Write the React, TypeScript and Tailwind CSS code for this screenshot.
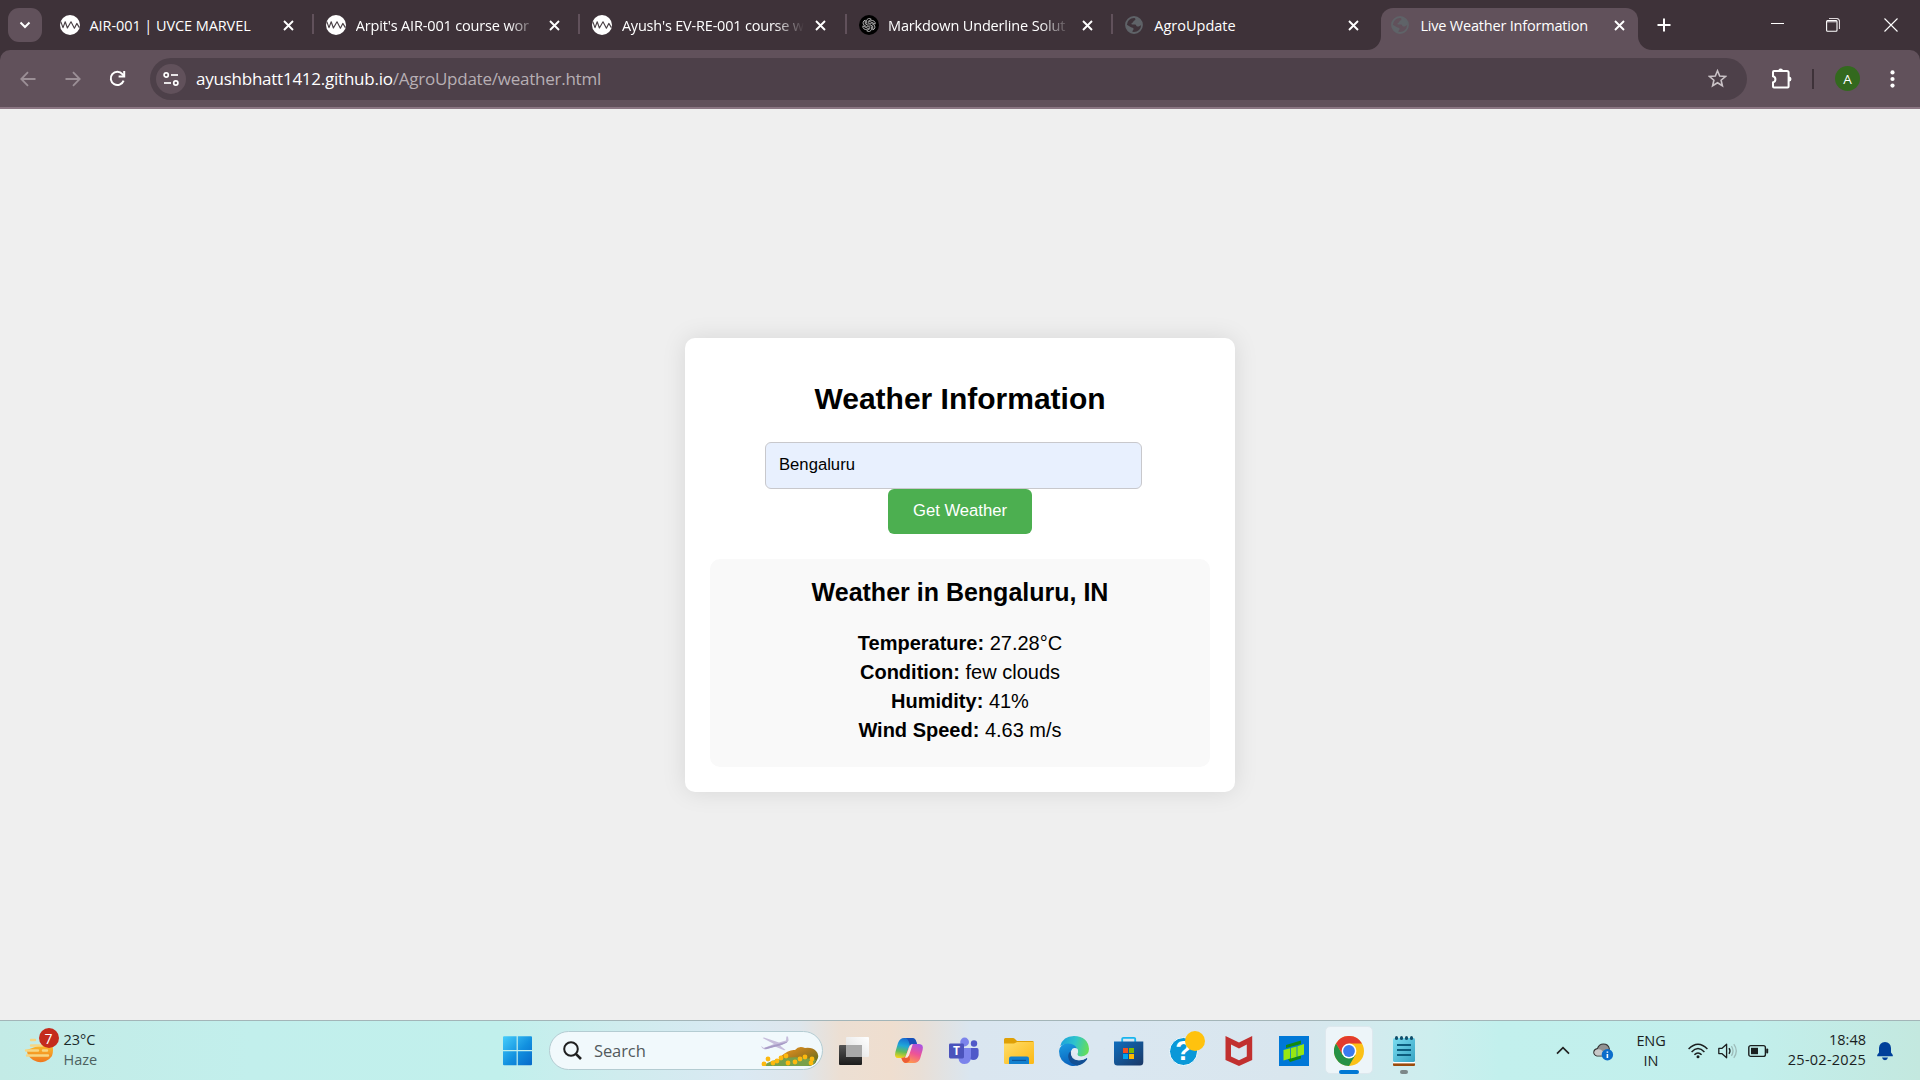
import React from "react";

const ui = "font-['Open_Sans','Noto_Sans',sans-serif]";

function WaveIcon() {
  return (
    <svg width="20" height="20" viewBox="0 0 20 20">
      <circle cx="10" cy="10" r="10" fill="#fff" />
      <path d="M0.8 6.6 L3 12.6 L5.2 6.8 L7.4 13 L11 6.8 L14.4 13.2 L16.8 8.4 L19.4 12.6" fill="none" stroke="#4a4146" strokeWidth="1.15" strokeLinejoin="round" />
    </svg>
  );
}

function GptIcon() {
  return (
    <svg width="20" height="20" viewBox="0 0 20 20">
      <circle cx="10" cy="10" r="10" fill="#000" />
      <g fill="none" stroke="#e0e0e0" strokeWidth="0.7">
        {[0, 60, 120, 180, 240, 300].map((a) => (
          <path key={a} transform={`rotate(${a} 10 10)`} d="M7.4 8.6 V6 a2.9 2.9 0 0 1 4.9 -1.7 L9.2 6.2 V9.6" />
        ))}
      </g>
    </svg>
  );
}

function GlobeIcon() {
  return (
    <svg width="18" height="18" viewBox="0 0 18 18">
      <circle cx="9" cy="9" r="8" fill="none" stroke="#5f6368" strokeWidth="1.8" />
      <path d="M8.5 1.5 C11 2 10.8 4 9.4 4.6 C8.2 5 8.4 6.6 7 7 C6 7.3 6.4 8.6 7.6 8.6 H10 C11.4 8.6 11 10.6 12.4 10.6 C14 10.8 15 9.4 16.6 9 C16.6 3.4 12 .8 8.5 1.5Z M1.4 8.6 L5.6 11 C7 11.8 8.4 11.4 8.6 13 C8.6 14.2 7 14.4 7.4 16.6 C3 16 1 12.4 1.4 8.6Z" fill="#5f6368" />
    </svg>
  );
}

function Cross() {
  return (
    <svg width="11" height="11" viewBox="0 0 11 11" className="shrink-0">
      <path d="M1 1 L10 10 M10 1 L1 10" stroke="#fff" strokeWidth="1.9" />
    </svg>
  );
}

type TabProps = { icon: React.ReactNode; title: string; tracking: string; fade?: boolean; sep?: boolean; active?: boolean };

function Tab({ icon, title, tracking, fade, sep, active }: TabProps) {
  return (
    <div className="relative flex h-[50px] w-[266.2px] shrink-0 items-center pl-[13px]">
      {active && (
        <div className="absolute top-[7.5px] left-[3px] h-[42.5px] w-[257px] rounded-t-[12px] bg-[#61515b]">
          <svg className="absolute bottom-0 -left-[14px]" width="14" height="14">
            <path d="M14 0 V14 H0 A14 14 0 0 0 14 0Z" fill="#61515b" />
          </svg>
          <svg className="absolute -right-[14px] bottom-0" width="14" height="14">
            <path d="M0 0 V14 H14 A14 14 0 0 1 0 0Z" fill="#61515b" />
          </svg>
        </div>
      )}
      <div className="relative w-[29.5px] shrink-0">{icon}</div>
      <div className={`relative mt-[2px] h-[24px] w-[184px] text-[14.5px] leading-[24px] whitespace-nowrap text-white ${tracking} ${fade ? "[mask-image:linear-gradient(to_right,black_152px,transparent_182px)]" : ""}`}>
        {title}
      </div>
      <div className="relative ml-[9.5px] flex">
        <Cross />
      </div>
      {sep && <div className="absolute top-[14px] -right-px h-[20px] w-[2px] bg-[#61515b]" />}
    </div>
  );
}

function TabStrip() {
  return (
    <div className="flex h-[50px] items-center bg-[#3e3239]">
      <div className="ml-[8px] flex h-[34px] w-[34px] items-center justify-center rounded-[11px] bg-[#61515b]">
        <svg width="12" height="8" viewBox="0 0 12 8"><path d="M1.5 1.5 L6 6 L10.5 1.5" fill="none" stroke="#fff" strokeWidth="2" /></svg>
      </div>
      <div className="w-[5px]" />
      <Tab icon={<WaveIcon />} title="AIR-001 | UVCE MARVEL" tracking="tracking-[-0.08px]" sep />
      <Tab icon={<WaveIcon />} title="Arpit's AIR-001 course wor" tracking="tracking-[-0.16px]" fade sep />
      <Tab icon={<WaveIcon />} title="Ayush's EV-RE-001 course w" tracking="tracking-[-0.2px]" fade sep />
      <Tab icon={<GptIcon />} title="Markdown Underline Solut" tracking="tracking-[-0.16px]" fade sep />
      <Tab icon={<GlobeIcon />} title="AgroUpdate" tracking="tracking-[0px]" />
      <Tab icon={<GlobeIcon />} title="Live Weather Information" tracking="tracking-[-0.2px]" active />
      <svg className="ml-[12.5px]" width="14" height="14"><path d="M7 0.5 V13.5 M0.5 7 H13.5" stroke="#fff" strokeWidth="2" /></svg>
      <div className="flex-1" />
      <svg width="14" height="14"><path d="M1 5.5 H14" stroke="#fff" /></svg>
      <svg className="ml-[42px]" width="14" height="14" fill="none">
        <path d="M3 0.5 H10.5 A3 3 0 0 1 13.5 3.5 V11" stroke="#ddd6da" strokeWidth="1.2" />
        <path d="M1 2.5 H10.5 V4.5 H1Z" fill="#a39aa0" />
        <rect x="0.6" y="2.6" width="10.4" height="10.6" rx="1" stroke="#fff" strokeWidth="1.1" />
      </svg>
      <svg className="mr-[22px] ml-[44px]" width="14" height="14"><path d="M0.5 0.5 L13.5 13.5 M13.5 0.5 L0.5 13.5" stroke="#fff" strokeWidth="1.1" /></svg>
    </div>
  );
}

function Toolbar() {
  return (
    <div className="h-[59px] bg-[#3e3239]">
      <div className="flex h-[59px] items-center rounded-t-[10px] border-b-2 border-[#8b7683] bg-[#61515b]">
        <svg className="ml-[20px]" width="16" height="16" fill="none" stroke="#9b8f96" strokeWidth="1.8"><path d="M15.5 8 H1.5 M8 1.2 L1.3 8 L8 14.8" /></svg>
        <svg className="ml-[29px]" width="16" height="16" fill="none" stroke="#9b8f96" strokeWidth="1.8"><path d="M0.5 8 H14.5 M8 1.2 L14.7 8 L8 14.8" /></svg>
        <svg className="ml-[28px]" width="17" height="17" fill="none" stroke="#fff" strokeWidth="2">
          <path d="M14.6 10.6 A6.6 6.6 0 1 1 13.4 4.1 L15 6" /><path d="M15.2 1 V6.6 H9.6" />
        </svg>
        <div className="ml-[24px] flex h-[42px] w-[1597px] items-center rounded-full bg-[#4d4049] pr-[20px] pl-[6px]">
          <div className="flex size-[30px] items-center justify-center rounded-full bg-[#61515b]">
            <svg width="16" height="14" fill="none" stroke="#fff" strokeWidth="1.7">
              <circle cx="3.2" cy="3" r="2.1" /><path d="M8 3 H15" /><circle cx="12.8" cy="11" r="2.1" /><path d="M1 11 H8" />
            </svg>
          </div>
          <div className="ml-[10px] flex-1 pt-[1px] text-[17px] tracking-[-0.24px] whitespace-nowrap text-white">
            ayushbhatt1412.github.io<span className="text-[#b7afb4]">/AgroUpdate/weather.html</span>
          </div>
          <svg width="19" height="19" viewBox="0 0 19 19"><path d="M9.5 1.8 L11.7 7 L17.4 7.5 L13.1 11.2 L14.4 16.8 L9.5 13.8 L4.6 16.8 L5.9 11.2 L1.6 7.5 L7.3 7Z" fill="none" stroke="#c9c2c6" strokeWidth="1.6" /></svg>
        </div>
        <svg className="ml-[24px]" width="22" height="22" viewBox="0 0 22 22">
          <path d="M2 4 A1 1 0 0 1 3 3 H16 A1.6 1.6 0 0 1 17.6 4.6 V18.4 A1 1 0 0 1 16.6 19.4 H3 A1 1 0 0 1 2 18.4 V14.4 A3.2 3.2 0 0 0 2 8.2Z" fill="none" stroke="#fff" strokeWidth="2" />
          <path d="M7.2 3 A2.4 2.4 0 0 1 12 3Z M18 8.6 A2.5 2.5 0 0 1 18 13.6Z" fill="#fff" />
        </svg>
        <div className="ml-[19px] h-[20px] w-[2px] bg-[#3e3239]" />
        <div className="ml-[21px] flex size-[25px] items-center justify-center rounded-full bg-[#33691e] pt-px text-[13.5px] text-white">A</div>
        <svg className="ml-[30px]" width="5" height="18" fill="#fff"><circle cx="2.5" cy="2.4" r="2.1" /><circle cx="2.5" cy="9" r="2.1" /><circle cx="2.5" cy="15.6" r="2.1" /></svg>
      </div>
    </div>
  );
}

function WeatherCard() {
  const rows = [
    ["Temperature:", "27.28°C"],
    ["Condition:", "few clouds"],
    ["Humidity:", "41%"],
    ["Wind Speed:", "4.63 m/s"],
  ];
  return (
    <div className="flex h-[454px] w-[550px] flex-col items-center rounded-[10px] bg-white pt-[43px] font-['Liberation_Sans',sans-serif] text-black shadow-[0_0_25px_rgba(0,0,0,0.1)]">
      <h2 className="h-[61px] text-[30px] leading-[36px] font-bold whitespace-nowrap">Weather Information</h2>
      <div className="mr-[13px] h-[47px] w-[377px] rounded-[6px] border border-[#c8c8cc] bg-[#e8f0fe] pl-[13px] text-[16.67px] leading-[43px]">Bengaluru</div>
      <button className="h-[45px] w-[144px] rounded-[6px] bg-[#4caf50] pb-[1px] text-[16.67px] text-white">Get Weather</button>
      <div className="mt-[25px] flex h-[208px] w-[500px] flex-col items-center rounded-[10px] bg-[#f9f9f9] pt-[17px]">
        <h3 className="h-[53px] text-[25px] leading-[32px] font-bold whitespace-nowrap">Weather in Bengaluru, IN</h3>
        {rows.map(([k, v]) => (
          <p key={k} className="text-[20px] leading-[29px] whitespace-nowrap"><strong>{k}</strong> {v}</p>
        ))}
      </div>
    </div>
  );
}

function HazeIcon() {
  return (
    <svg width="36" height="40" viewBox="0 0 36 40">
      <defs><linearGradient id="hz" x1="0" y1="0" x2="0" y2="1"><stop offset="0" stopColor="#fbc02d" /><stop offset="1" stopColor="#f0781e" /></linearGradient></defs>
      <path d="M2.5 18 A14 14 0 0 0 28 24 Q30 18 28 12 L14 14Z" fill="url(#hz)" />
      <g stroke="#f6d684" strokeWidth="2.4" strokeLinecap="round">
        <path d="M7 8 H11 M7 13.5 H18 M2 18.5 H14 M19 18.5 H23 M3 23.5 H24" />
      </g>
    </svg>
  );
}

function StartIcon() {
  return (
    <svg width="30" height="30" viewBox="0 0 30 30">
      <defs><linearGradient id="win" x1="0" y1="0" x2="1" y2="1"><stop offset="0" stopColor="#45cdfb" /><stop offset=".55" stopColor="#1290df" /><stop offset="1" stopColor="#0669c9" /></linearGradient></defs>
      <path d="M1 .3 H13.6 V14 H0 V1.3 Q0 .3 1 .3Z M14.8 .3 H28 Q29 .3 29 1.3 V14 H14.8Z M0 15.2 H13.6 V29.3 H1 Q0 29.3 0 28.3Z M14.8 15.2 H29 V28.3 Q29 29.3 28 29.3 H14.8Z" fill="url(#win)" />
    </svg>
  );
}

function SearchArt() {
  return (
    <svg width="58" height="30" viewBox="0 0 58 30">
      <defs><linearGradient id="hill" x1="0" y1="0" x2="1" y2="1"><stop offset="0" stopColor="#f19a20" /><stop offset=".5" stopColor="#a8791d" /><stop offset="1" stopColor="#4d7020" /></linearGradient></defs>
      <path d="M0 10 L3 12 L13 8 L1.6 2 L3 1.6 L18 6.4 L25 4.6 L25.4 0.6 L27 0.4 L27.6 4.6 Q26 7 19 9.4 L24.6 14 L23 14.2 L14 10.4 L4 13.4 Q1 13 0 10Z" fill="#c6bddb" />
      <path d="M3 12 L14 8.8 L27 5.6 Q25 8 17 10 L5 13.2Z" fill="#a79bc6" />
      <path d="M19 21 Q28 13 34 14 Q38 9 44 12 Q51 11 55 15 Q59 19 56 24 Q54 30 46 30 H19Z" fill="url(#hill)" />
      <path d="M3 29 Q10 24 24 22 Q40 20 55 24 Q53 30 46 30 H5Z" fill="#78a04a" />
      {[[3, 28], [7, 23], [12, 27], [16, 25], [20, 22], [25, 20], [27, 27], [34, 26], [39, 23], [44, 21], [51, 23], [50, 27]].map(([x, y]) => (
        <circle key={`${x}-${y}`} cx={x} cy={y} r="2.4" fill="#fdb90f" />
      ))}
    </svg>
  );
}

const slot = "flex h-[59px] w-[55px] shrink-0 items-center justify-center pt-[1px]";

function AppIcons() {
  return (
    <>
      <div className={slot}>
        <svg width="30" height="30" viewBox="0 0 30 30">
          <defs>
            <linearGradient id="tvd" x1="0" y1="0" x2="0" y2="1"><stop offset="0" stopColor="#555" /><stop offset="1" stopColor="#1c1c1c" /></linearGradient>
            <linearGradient id="tvw" x1="1" y1="0" x2="0" y2="1"><stop offset="0" stopColor="#fff" /><stop offset="1" stopColor="#dedede" /></linearGradient>
          </defs>
          <rect x="0" y="9" width="23" height="20" rx="1" fill="url(#tvd)" />
          <rect x="7" y="1" width="23" height="20" rx="1" fill="url(#tvw)" />
          <path d="M7 9 H23 V21 H8 Q7 21 7 20Z" fill="#a9a9a9" />
        </svg>
      </div>
      <div className={slot}>
        <svg width="30" height="30" viewBox="0 0 30 30">
          <defs>
            <linearGradient id="cp1" x1=".5" y1="0" x2=".3" y2="1"><stop offset="0" stopColor="#1769d2" /><stop offset=".4" stopColor="#20a6d8" /><stop offset=".7" stopColor="#63bd58" /><stop offset="1" stopColor="#f2d31b" /></linearGradient>
            <linearGradient id="cp2" x1=".8" y1="0" x2=".4" y2="1"><stop offset="0" stopColor="#a855e4" /><stop offset=".5" stopColor="#ee5397" /><stop offset="1" stopColor="#ff9b4c" /></linearGradient>
          </defs>
          <path d="M10 2 H18 Q21 2 22 5 L23 8 H19 Q16 8 15 11 L12 20 Q11 22 8 22 H4 Q0 22 1.4 16 L4 7 Q6 2 10 2Z" fill="url(#cp1)" />
          <path d="M12 2 H18 Q21 2 22 5 L23 8 H19 Q17 8 16 10 Q15 4 12 2Z" fill="#1850b8" />
          <path d="M20 27 H12 Q9 27 8 24 L7.4 22 Q11 22 12 20 L15 11 Q16 8 19 8 H25 Q30 8 28.6 14 L26 23 Q24 27 20 27Z" fill="url(#cp2)" />
          <path d="M7.4 22 Q11 22 12 20 L14.5 12 L16 24 Q14 27 12 27 Q9 27 7.4 22Z" fill="#ed5d35" />
          <path d="M15.4 10.6 Q16.4 8 18.8 8 L15 19.4 Q14 22 11 22Z" fill="#f5e8e0" />
        </svg>
      </div>
      <div className={slot}>
        <div className="relative size-[30px]">
          <svg width="30" height="30" viewBox="0 0 30 30">
            <circle cx="25" cy="7.5" r="3.2" fill="#5059c9" />
            <path d="M20 12 H28 Q29.6 12 29.6 14 V19 Q29 24 24 24 L20 23Z" fill="#5059c9" />
            <circle cx="15.6" cy="6" r="4.4" fill="#7b83eb" />
            <path d="M10 12 H22 V20 Q22 28 15.6 28 Q10 28 9.4 22Z" fill="#7b83eb" />
            <rect x="0" y="7.5" width="15" height="15" rx="1.4" fill="#4b53bc" />
          </svg>
          <span className="absolute top-[7px] left-0 w-[15px] text-center text-[12px] leading-[16px] font-bold text-white">T</span>
        </div>
      </div>
      <div className={slot}>
        <svg width="30" height="30" viewBox="0 0 30 30">
          <defs><linearGradient id="fx" x1="0" y1="0" x2="1" y2="1"><stop offset="0" stopColor="#ffdd68" /><stop offset="1" stopColor="#fcb814" /></linearGradient></defs>
          <path d="M0 3.5 Q0 2 1.5 2 H9 Q10 2 11 3 L13 5 H28.5 Q30 5 30 6.5 V12 H0Z" fill="#dfa006" />
          <path d="M0 7.4 H10 L13 6 H30 V26.5 Q30 28 28.5 28 H1.5 Q0 28 0 26.5Z" fill="url(#fx)" />
          <path d="M5 28 V22.5 Q5 20.5 7 20.5 H23 Q25 20.5 25 22.5 V28Z" fill="#1280cf" />
          <path d="M8 24.4 H22" stroke="#0a559b" strokeWidth="1.2" />
        </svg>
      </div>
      <div className={slot}>
        <svg width="30" height="30" viewBox="0 0 30 30">
          <defs>
            <linearGradient id="eg1" x1="0" y1=".3" x2="1" y2=".5"><stop offset="0" stopColor="#1ba2dc" /><stop offset=".5" stopColor="#2fc4cb" /><stop offset="1" stopColor="#65de58" /></linearGradient>
            <linearGradient id="eg2" x1="0" y1="0" x2=".3" y2="1"><stop offset="0" stopColor="#1b9de2" /><stop offset="1" stopColor="#0a63bd" /></linearGradient>
          </defs>
          <path d="M1.2 10 Q4 0 15 0 Q29 .5 30 13 Q30 20 22 20.5 Q18 20.4 18.4 17.6 Q20.4 15 17 11.6 Q9 6 1.2 10Z" fill="url(#eg1)" />
          <path d="M0 15 Q1 8 9 7.6 Q17 8 18.4 14 Q15 11 12 15 Q8 21 15 26.5 Q19 29 22 28 Q17 31 11 29.5 Q0 26 0 15Z" fill="url(#eg2)" />
          <path d="M11.8 15 Q11 24 20 24.4 Q25 24.4 27.6 22 Q28.6 22 28 23.4 Q24 29 18 29.4 Q10 28 9.2 21 Q9 17 11.8 15Z" fill="#124f94" />
          <circle cx="15.8" cy="15.2" r="3.2" fill="#e2ecf4" />
          <path d="M12.8 16 Q13 22 20 23.6 Q25 24 28 21.8 Q24 21 20 20.4 Q18 20 18 17Z" fill="#dfeaf3" />
        </svg>
      </div>
      <div className={slot}>
        <svg width="30" height="30" viewBox="0 0 30 30">
          <defs><linearGradient id="st" x1="0" y1="0" x2="1" y2="1"><stop offset="0" stopColor="#0f6dbd" /><stop offset="1" stopColor="#1b3866" /></linearGradient></defs>
          <path d="M8.2 6 V2.8 Q8.2 1.8 9.4 1.8 H20 Q21.2 1.8 21.2 2.8 V6" fill="none" stroke="#18b5ee" strokeWidth="1.8" />
          <path d="M0 5.5 H29.3 V26 Q29.3 29.6 26 29.6 H3.5 Q0 29.6 0 26Z" fill="url(#st)" />
          <rect x="9" y="12" width="5" height="5" fill="#f25022" /><rect x="15" y="12" width="5" height="5" fill="#7fba00" />
          <rect x="9" y="18" width="5" height="5" fill="#00a4ef" /><rect x="15" y="18" width="5" height="5" fill="#ffb900" />
        </svg>
      </div>
      <div className={slot}>
        <div className="relative h-[38px] w-[30px]">
          <div className="absolute top-[5px] left-0 flex size-[29px] items-center justify-center rounded-full border-[1.5px] border-white bg-[#0a98d8] font-['Liberation_Sans',sans-serif] text-[27px] leading-[27px] font-bold text-white">?</div>
          <div className="absolute -top-[1px] left-[15.5px] size-[20px] rounded-full bg-[#ffc20e]" />
        </div>
      </div>
      <div className={slot}>
        <svg width="30" height="30" viewBox="0 0 30 30"><path d="M1.5 0 L15 6.6 L28.2 0 V24 L15 30 L1.5 24Z M7 8.6 V20.6 L15 24.2 L22.8 20.6 V8.6 L15 12.6Z" fill="#c1302f" fillRule="evenodd" /></svg>
      </div>
      <div className={slot}>
        <svg width="30" height="30" viewBox="0 0 30 30">
          <rect width="30" height="30" fill="#0078d7" />
          <path d="M7 9 L22 4.5 V8 L7 12Z M9 23 L22 19.6 V22.4 L11 26Z" fill="#138a10" />
          <path d="M4.5 14 L11 12.2 V22.6 L4.5 24.6Z M11.8 12 L17.6 10.4 V20.8 L11.8 22.4Z M18.4 10.2 L25 8 V18.4 L18.4 20.6Z" fill="#96e812" />
        </svg>
      </div>
      <div className="relative flex h-[59px] w-[55px] items-center justify-center pt-[1px]">
        <div className="absolute top-[5px] left-[3.5px] h-[48px] w-[48px] rounded-[5px] border border-[#dde8ee] bg-[#edf5f9]" />
        <svg className="relative" width="30" height="30" viewBox="0 0 30 30">
          <circle cx="15" cy="15" r="15" fill="#fbc116" />
          <path d="M2 7.5 A15 15 0 0 1 28 7.5 L15 7.5 L8.5 18.75Z" fill="#e33b2e" />
          <path d="M2 7.5 A15 15 0 0 0 15 30 L21.5 18.75 L8.5 18.75Z" fill="#269146" />
          <circle cx="15" cy="15" r="7.4" fill="#fff" /><circle cx="15" cy="15" r="5.9" fill="#3a7af0" />
        </svg>
        <div className="absolute top-[49px] left-[17.5px] h-[4px] w-[20px] rounded-full bg-[#0078d4]" />
      </div>
      <div className="relative flex h-[59px] w-[55px] items-center justify-center pt-[1px]">
        <svg width="24" height="30" viewBox="0 0 24 30">
          <defs><linearGradient id="np" x1="0" y1="0" x2="1" y2="1"><stop offset="0" stopColor="#7bdcf0" /><stop offset="1" stopColor="#35a3c3" /></linearGradient></defs>
          <rect x="1" y="26" width="22" height="4" rx="1" fill="#9b4b0c" /><rect x="1" y="25" width="22" height="2.4" fill="#fff" />
          <rect x="1" y="2" width="22" height="24" rx="1.5" fill="url(#np)" />
          <path d="M5 9 H19 M5 14 H19 M5 19 H19" stroke="#0c5d7e" strokeWidth="1.8" />
          <g fill="#124f6b"><rect x="3" y="0" width="3" height="4" rx="1.5" /><rect x="8" y="0" width="3" height="4" rx="1.5" /><rect x="13" y="0" width="3" height="4" rx="1.5" /><rect x="18" y="0" width="3" height="4" rx="1.5" /></g>
        </svg>
        <div className="absolute top-[49px] left-[23.5px] h-[4px] w-[8px] rounded-full bg-[#7d8889]" />
      </div>
    </>
  );
}

function Tray() {
  return (
    <div className="ml-auto flex h-[59px] items-center text-[14.5px] leading-[20px] text-[#1b1f1f]">
      <svg width="14" height="9" fill="none" stroke="#222" strokeWidth="1.7"><path d="M1 7.6 L7 1.6 L13 7.6" /></svg>
      <svg className="mt-[3px] ml-[23px]" width="21" height="20" viewBox="0 0 21 20">
        <path d="M4 14 Q.6 13 .8 10 Q1.2 7 4.4 6.6 Q6 2 10.4 2 Q15.4 2 16.4 7 L10 14Z" fill="#929292" stroke="#333" strokeWidth="1.1" />
        <path d="M4 13.4 Q1.4 13 1.4 10 Q2 7.4 5 7.2 Q8 7 10 9.6 L9.6 13.4Z" fill="#c8c8c8" />
        <circle cx="14.4" cy="12.8" r="5.7" fill="#0b6dcb" />
        <path d="M14.4 12 V16 M14.4 9.4 V10.8" stroke="#fff" strokeWidth="1.6" />
      </svg>
      <div className="ml-[18px] w-[38px] text-center tracking-[-0.1px]">ENG<br />IN</div>
      <svg className="ml-[18px]" width="20" height="16" viewBox="0 0 20 16" fill="none" stroke="#1b1f1f" strokeWidth="1.5">
        <path d="M.6 6 Q10 -3.6 19.4 6 M3.6 9 Q10 2.2 16.4 9 M6.4 11.8 Q10 8 13.6 11.8" /><circle cx="10" cy="13.8" r="1.5" fill="#1b1f1f" stroke="none" />
      </svg>
      <svg className="ml-[10px]" width="20" height="16" viewBox="0 0 20 16" fill="none" stroke="#1b1f1f" strokeWidth="1.3">
        <path d="M.8 5.4 H3.8 L8.6 1.2 V14.8 L3.8 10.6 H.8Z" strokeLinejoin="round" /><path d="M11 5.2 Q13 8 11 10.8" />
        <path d="M13.4 3.2 Q16.6 8 13.4 12.8 M15.8 1.2 Q20.8 8 15.8 14.8" stroke="#9dbbb9" />
      </svg>
      <svg className="ml-[10px]" width="21" height="14" viewBox="0 0 21 14">
        <rect x=".8" y="1.6" width="16.6" height="10.8" rx="2" fill="none" stroke="#1b1f1f" strokeWidth="1.4" />
        <rect x="3" y="3.8" width="7" height="6.4" fill="#1b1f1f" /><rect x="18.2" y="4.6" width="2" height="4.8" rx="1" fill="#1b1f1f" />
      </svg>
      <div className="w-[97px] pb-[2px] text-right whitespace-nowrap">18:48<div className="tracking-[0.25px]">25-02-2025</div></div>
      <svg className="mr-[27px] ml-[11px]" width="16" height="20" viewBox="0 0 16 20">
        <path d="M8 1 Q13.6 1.4 14 7 V11.4 L15.8 14 V15.2 H.2 V14 L2 11.4 V7 Q2.4 1.4 8 1Z M5 16.6 H11 Q10.4 19.2 8 19.2 Q5.6 19.2 5 16.6Z" fill="#00409a" />
      </svg>
    </div>
  );
}

function Taskbar() {
  return (
    <div className="flex h-[60px] items-center border-t border-[#a3b5b8] bg-[linear-gradient(90deg,#c3ebe6_0px,#c2efec_250px,#c1f0ec_500px,#cfecee_620px,#dae9f3_740px,#dee6ec_800px,#ecdfd3_840px,#efdecf_890px,#e9dfd6_920px,#dae6f0_970px,#dae7f1_1100px,#d9e6ee_1290px,#cdeeee_1430px,#c2f0ed_1500px,#c2efec_1750px,#c3e8df_1920px)]">
      <div className="flex w-[503px] items-center pl-[23.5px]">
        <div className="relative mt-[3px] h-[40px] w-[36px]">
          <HazeIcon />
          <div className="absolute -top-[4px] left-[15px] flex size-[20px] items-center justify-center rounded-full bg-[#c42b1c] text-[14px] text-white">7</div>
        </div>
        <div className="mb-[2px] ml-[4px] text-[14.5px] leading-[20px] text-[#1b2b2b]">
          23°C<div className="text-[#4c6160]">Haze</div>
        </div>
      </div>
      <StartIcon />
      <div className="ml-[16px] flex h-[39px] w-[274px] items-center rounded-full border border-[#b4ccd2] bg-[#f1f9fc] pr-[3px] pl-[13px]">
        <svg width="19" height="19" fill="none" stroke="#1f1f1f" strokeWidth="2"><circle cx="8" cy="8" r="6.8" /><path d="M12.8 12.8 L18 18" strokeWidth="2.6" /></svg>
        <div className="ml-[12px] flex-1 pt-px text-[16.5px] tracking-[-0.1px] text-[#535a5d]">Search</div>
        <SearchArt />
      </div>
      <div className="w-[3.5px] shrink-0" />
      <AppIcons />
      <Tray />
    </div>
  );
}

export default function App() {
  return (
    <div className={`flex h-[1080px] w-[1920px] flex-col overflow-hidden bg-[#efefef] ${ui}`}>
      <TabStrip />
      <Toolbar />
      <main className="flex flex-1 items-center justify-center">
        <WeatherCard />
      </main>
      <Taskbar />
    </div>
  );
}
